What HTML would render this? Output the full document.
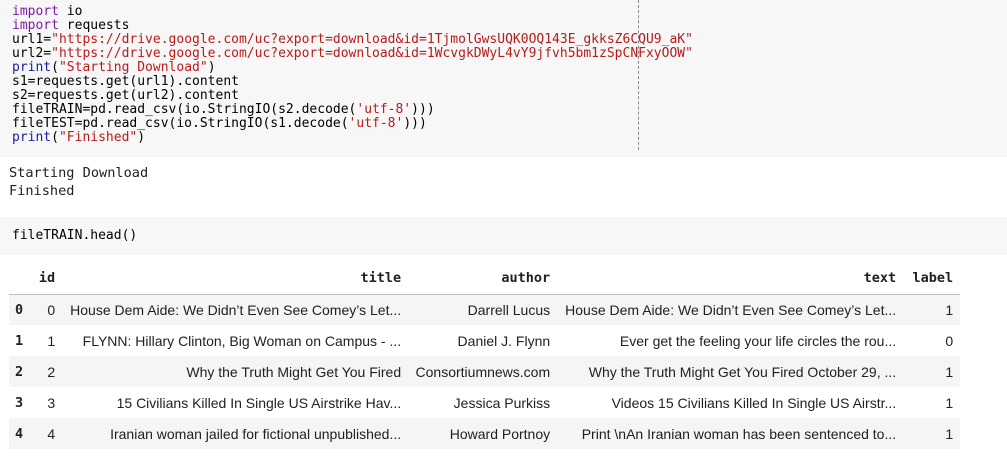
<!DOCTYPE html>
<html><head><style>
body{margin:0;width:1007px;height:467px;background:#fff;position:relative;overflow:hidden}
.code{position:absolute;left:0;background:#f7f7f7;width:1007px}
pre{margin:0;font-family:"DejaVu Sans Mono","Liberation Mono",monospace;font-size:13px;line-height:14px;color:#000}
.k{color:#7b1fa2}.s{color:#b71c1c}.p{color:#1a1aa6}
.out{position:absolute;left:9px;top:164px;font-family:"DejaVu Sans Mono",monospace;font-size:13.6px;line-height:18px;color:#212121}
table{position:absolute;left:9px;top:263px;border-collapse:collapse;font-family:"Liberation Sans",sans-serif;font-size:14px;color:#212121}
td,th{height:31px;padding:0 7px;text-align:right;white-space:nowrap;box-sizing:border-box}
th{font-family:"DejaVu Sans Mono",monospace;font-weight:bold;font-size:13.5px;height:31px;border-bottom:1px solid #bdbdbd}
td.i{font-family:"DejaVu Sans Mono",monospace;font-weight:bold;text-align:left;font-size:13.5px;padding-left:6px}
tr.g td{background:#f5f5f5}
</style></head><body>
<div class="code" style="top:0;height:157px">
<div style="position:absolute;left:638px;top:0;height:150px;border-left:1px dashed #888"></div>
<pre style="position:absolute;left:12px;top:5px"><span class="k">import</span> io
<span class="k">import</span> requests
url1=<span class="s">"https://drive.google.com/uc?export=download&amp;id=1TjmolGwsUQK0OQ143E_gkksZ6CQU9_aK"</span>
url2=<span class="s">"https://drive.google.com/uc?export=download&amp;id=1WcvgkDWyL4vY9jfvh5bm1zSpCNFxyOOW"</span>
<span class="p">print</span>(<span class="s">"Starting Download"</span>)
s1=requests.get(url1).content
s2=requests.get(url2).content
fileTRAIN=pd.read_csv(io.StringIO(s2.decode(<span class="s">'utf-8'</span>)))
fileTEST=pd.read_csv(io.StringIO(s1.decode(<span class="s">'utf-8'</span>)))
<span class="p">print</span>(<span class="s">"Finished"</span>)</pre>
</div>
<div class="out">Starting Download<br>Finished</div>
<div class="code" style="top:217px;height:38px"><pre style="position:absolute;left:12px;top:12px">fileTRAIN.head()</pre></div>
<table>
<colgroup><col style="width:20px"><col style="width:32px"><col style="width:346px"><col style="width:149px"><col style="width:346px"><col style="width:57px"></colgroup>
<tr><th></th><th>id</th><th>title</th><th>author</th><th>text</th><th>label</th></tr>
<tr class="g"><td class="i">0</td><td>0</td><td>House Dem Aide: We Didn’t Even See Comey’s Let...</td><td>Darrell Lucus</td><td>House Dem Aide: We Didn’t Even See Comey’s Let...</td><td>1</td></tr>
<tr><td class="i">1</td><td>1</td><td>FLYNN: Hillary Clinton, Big Woman on Campus - ...</td><td>Daniel J. Flynn</td><td>Ever get the feeling your life circles the rou...</td><td>0</td></tr>
<tr class="g"><td class="i">2</td><td>2</td><td>Why the Truth Might Get You Fired</td><td>Consortiumnews.com</td><td>Why the Truth Might Get You Fired October 29, ...</td><td>1</td></tr>
<tr><td class="i">3</td><td>3</td><td>15 Civilians Killed In Single US Airstrike Hav...</td><td>Jessica Purkiss</td><td>Videos 15 Civilians Killed In Single US Airstr...</td><td>1</td></tr>
<tr class="g"><td class="i">4</td><td>4</td><td>Iranian woman jailed for fictional unpublished...</td><td>Howard Portnoy</td><td>Print \nAn Iranian woman has been sentenced to...</td><td>1</td></tr>
</table>
</body></html>
